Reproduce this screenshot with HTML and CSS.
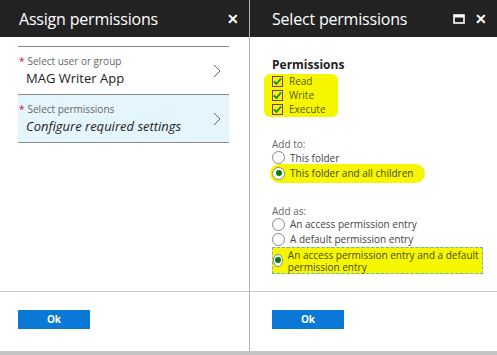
FILE: index.html
```html
<!DOCTYPE html>
<html lang="en">
<head>
    <meta charset="UTF-8">
    <title>Assign permissions</title>
    <link rel="stylesheet" href="styles.css">
</head>
<body>
    <div class="screen">
        <!-- Panel izquierdo -->
        <div class="panel panel-left">
            <div class="header">
                <span class="title">Assign permissions</span>
                <span class="close">&#x2715;</span>
            </div>
            <div class="content">
                <div class="row">
                    <div class="row-text">
                        <div class="caption"><span class="req">*</span>Select user or group</div>
                        <div class="value">MAG Writer App</div>
                    </div>
                    <svg class="chevron" width="8" height="14" viewBox="0 0 8 14"><path d="M1 1 L7 7 L1 13" fill="none" stroke="#666" stroke-width="1"/></svg>
                </div>
                <div class="row active">
                    <div class="row-text">
                        <div class="caption"><span class="req">*</span>Select permissions</div>
                        <div class="value italic">Configure required settings</div>
                    </div>
                    <svg class="chevron" width="8" height="14" viewBox="0 0 8 14"><path d="M1 1 L7 7 L1 13" fill="none" stroke="#666" stroke-width="1"/></svg>
                </div>
            </div>
            <div class="footer">
                <button class="btn">Ok</button>
            </div>
        </div>

        <!-- Panel derecho -->
        <div class="panel panel-right">
            <div class="header">
                <span class="title">Select permissions</span>
                <span class="icons">
                    <svg width="12" height="10" viewBox="0 0 12 10"><rect x="1" y="1" width="10" height="8" fill="none" stroke="#fff" stroke-width="1.6"/><rect x="1" y="1" width="10" height="2.5" fill="#fff"/></svg>
                    <span class="close">&#x2715;</span>
                </span>
            </div>
            <div class="content">
                <div class="section-title">Permissions</div>
                <div class="checks">
                    <div class="check"><span class="box"><svg width="9" height="9" viewBox="0 0 9 9"><path d="M1 4.5 L3.5 7 L8 1.5" fill="none" stroke="#108a10" stroke-width="1.8"/></svg></span>Read</div>
                    <div class="check"><span class="box"><svg width="9" height="9" viewBox="0 0 9 9"><path d="M1 4.5 L3.5 7 L8 1.5" fill="none" stroke="#108a10" stroke-width="1.8"/></svg></span>Write</div>
                    <div class="check"><span class="box"><svg width="9" height="9" viewBox="0 0 9 9"><path d="M1 4.5 L3.5 7 L8 1.5" fill="none" stroke="#108a10" stroke-width="1.8"/></svg></span>Execute</div>
                </div>

                <div class="group group-to">
                    <div class="group-label">Add to:</div>
                    <div class="radio"><span class="dot"></span>This folder</div>
                    <div class="radio marked"><span class="dot on"></span>This folder and all children</div>
                </div>

                <div class="group group-as">
                    <div class="group-label">Add as:</div>
                    <div class="radio"><span class="dot"></span>An access permission entry</div>
                    <div class="radio"><span class="dot"></span>A default permission entry</div>
                    <div class="radio focus"><span class="dot on"></span><span class="long">An access permission entry and a default permission entry</span></div>
                </div>
            </div>
            <div class="footer">
                <button class="btn">Ok</button>
            </div>
        </div>
    </div>
</body>
</html>
```

FILE: styles.css
```css
/* Base */
* {
    box-sizing: border-box;
}
body {
    margin: 0;
    font-family: "Segoe UI", "Open Sans", Arial, sans-serif;
    background-color: #ffffff;
    color: #222222;
}

.screen {
    display: flex;
    width: 497px;
    height: 355px;
    border-bottom: 4px solid #c4c4c4;
}

/* Paneles */
.panel {
    display: flex;
    flex-direction: column;
}
.panel-left {
    width: 250px;
    border-right: 1px solid #b4b4b4;
}
.panel-right {
    flex: 1;
}

.header {
    height: 37px;
    flex-shrink: 0;
    display: flex;
    align-items: center;
    justify-content: space-between;
    background-color: #222222;
    color: #ffffff;
    padding: 0 10px 0 19px;
}
.panel-right .header {
    padding-left: 22px;
}
.title {
    font-size: 16px;
    letter-spacing: -0.2px;
}
.close {
    font-size: 14px;
    font-weight: bold;
}
.icons {
    display: flex;
    align-items: center;
    gap: 10px;
}

.content {
    flex: 1;
}
.panel-left .content {
    padding: 9px 20px 0 18px;
}
.panel-left .content::before {
    content: "";
    display: block;
    border-top: 1px solid #8a8a8a;
}

/* Filas */
.row {
    display: flex;
    align-items: center;
    justify-content: space-between;
    height: 48px;
    border-bottom: 1px solid #8a8a8a;
    padding: 0 8px 0 1px;
}
.row.active {
    background-color: #e4f5fd;
}
.caption {
    font-size: 10px;
    color: #666666;
}
.req {
    color: #d0103a;
    margin-right: 3px;
}
.value {
    font-size: 13px;
    color: #222222;
    margin-left: 7px;
    margin-top: 1px;
}
.italic {
    font-style: italic;
}

/* Permisos */
.panel-right .content {
    padding: 20px 10px 0 22px;
    font-size: 10px;
    color: #444444;
}
.section-title {
    font-size: 12px;
    line-height: 16px;
    font-weight: bold;
    color: #222222;
    margin-bottom: 1px;
}
.checks {
    display: inline-block;
    background-color: #f6f600;
    border-radius: 6px;
    padding: 0 12px 1px 8px;
    margin-left: -8px;
    color: #5a5a20;
}
.check {
    display: flex;
    align-items: center;
    height: 14px;
}
.box {
    width: 11px;
    height: 11px;
    border: 1px solid #7a3a6a;
    margin-right: 6px;
    display: flex;
    align-items: center;
    justify-content: center;
}

.group-to {
    margin-top: 21px;
}
.group-as {
    margin-top: 24px;
}
.group-label {
    color: #666666;
    line-height: 12px;
}
.radio {
    display: flex;
    align-items: center;
    height: 15px;
}
.dot {
    width: 13px;
    height: 13px;
    border: 1px solid #888888;
    border-radius: 50%;
    margin-right: 5px;
    display: flex;
    align-items: center;
    justify-content: center;
    background-color: #ffffff;
}
.dot.on::after {
    content: "";
    width: 6px;
    height: 6px;
    border-radius: 50%;
    background-color: #0a7a10;
}
.radio.marked {
    display: inline-flex;
    background-color: #f6f600;
    box-shadow: 0 0 0 2px #f6f600;
    border-radius: 8px;
    padding-right: 10px;
    color: #4a4a10;
}
.radio.focus {
    align-items: flex-start;
    height: auto;
    width: 211px;
    border: 1px dashed #6ab0d8;
    background-color: #f6f600;
    padding-top: 1px;
    line-height: 12px;
    color: #4a4a10;
}
.radio.focus .dot {
    margin-top: 5px;
}

/* Pie */
.footer {
    height: 60px;
    flex-shrink: 0;
    border-top: 1px solid #c8c8c8;
    padding: 14px 0 0 18px;
}
.panel-right .footer {
    padding-left: 22px;
}
.btn {
    width: 72px;
    height: 19px;
    background-color: #0a78d7;
    color: #ffffff;
    border: none;
    font-family: inherit;
    font-size: 10px;
    font-weight: bold;
    padding: 0;
}
```
